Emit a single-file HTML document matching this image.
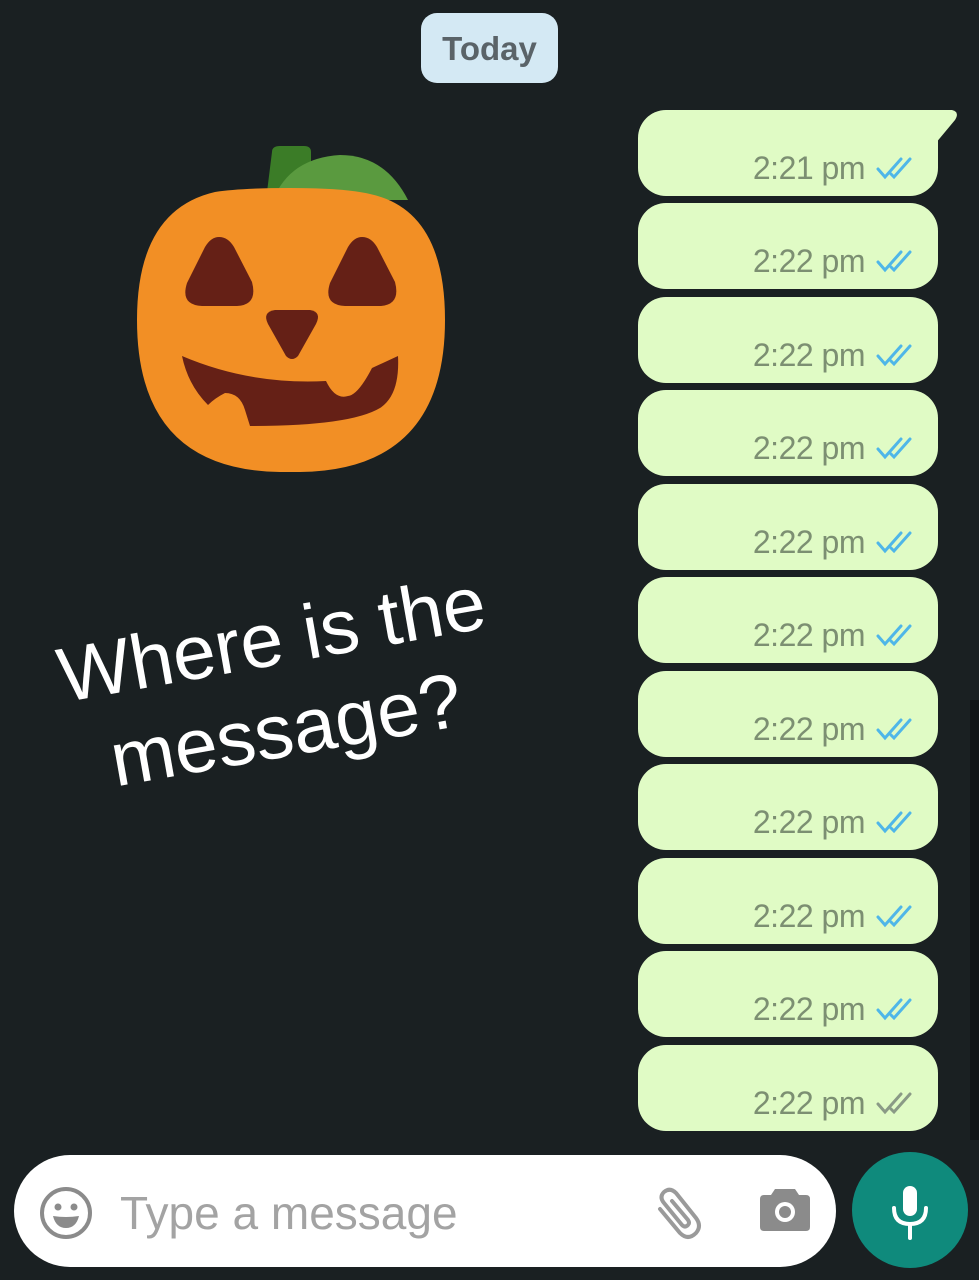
<!DOCTYPE html>
<html><head><meta charset="utf-8"><style>
html,body{margin:0;padding:0;}
body{width:979px;height:1280px;background:#1a2022;position:relative;overflow:hidden;font-family:"Liberation Sans",Arial,sans-serif;}
.b{position:absolute;left:638px;width:300px;height:86px;background:#e0fbc5;border-radius:28px;}
.t{position:absolute;right:73px;top:40px;font-size:32px;color:#7c8f72;letter-spacing:-0.5px;}
.c{position:absolute;right:22px;top:46px;}
</style></head><body>
<div style="position:absolute;left:421px;top:13px;width:137px;height:70px;background:#d4e9f4;border-radius:16px;text-align:center;line-height:72px;font-size:33px;font-weight:bold;color:#5a6368;">Today</div>

<svg style="position:absolute;left:0;top:0" width="979" height="1280">
<path d="M930 110 L952 110 Q960 112 955 120 L930 150 Z" fill="#e0fbc5"/>
<rect x="970" y="700" width="9" height="440" fill="#111516"/>
<path d="M272 152 Q272 146 280 146 L304 146 Q311 146 311 152 L311 200 L266 200 Z" fill="#3b7c27"/>
<path d="M273 200 Q290 158 340 155 Q385 155 408 200 Z" fill="#5a9a3f"/>
<path d="M215 192 Q240 188 290 188 Q345 188 370 194 Q445 210 445 320 Q445 470 300 472 L280 472 Q137 470 137 320 Q137 210 215 192 Z" fill="#f28f25"/>
<path d="M219 237 Q228 237 234 247 L252 282 Q258 305 237 306 L202 306 Q180 305 187 283 L205 247 Q211 237 219 237 Z" fill="#652016"/>
<path d="M362 237 Q371 237 377 247 L395 282 Q401 305 380 306 L345 306 Q323 305 330 283 L348 247 Q354 237 362 237 Z" fill="#652016"/>
<path d="M275 310 L310 310 Q322 312 316 324 L298 356 Q292 362 286 356 L268 324 Q262 312 275 310 Z" fill="#652016"/>
<path d="M182 356 Q250 385 326 381 Q335 400 348 396 Q358 395 372 368 L398 356 Q400 395 380 408 Q350 426 250 426 L245 410 Q240 393 225 393 Q215 398 208 405 Q188 385 182 356 Z" fill="#652016"/>
<g transform="rotate(-10 65 700)" fill="#fff" font-family="Liberation Sans, Arial, sans-serif" font-size="77">
<text x="63" y="702">Where is the</text>
<text x="100" y="794">message?</text>
</g>
</svg>

<div class="b" style="top:110px;border-top-right-radius:0"><span class="t">2:21 pm</span><svg class="c" width="40" height="26" viewBox="0 0 40 26"><path d="M2 13 L9 21 L25 3 M15 18 L18 21 L34 3" stroke="#4fb6e8" stroke-width="3" fill="none" stroke-linecap="round"/></svg></div>
<div class="b" style="top:203px"><span class="t">2:22 pm</span><svg class="c" width="40" height="26" viewBox="0 0 40 26"><path d="M2 13 L9 21 L25 3 M15 18 L18 21 L34 3" stroke="#4fb6e8" stroke-width="3" fill="none" stroke-linecap="round"/></svg></div>
<div class="b" style="top:297px"><span class="t">2:22 pm</span><svg class="c" width="40" height="26" viewBox="0 0 40 26"><path d="M2 13 L9 21 L25 3 M15 18 L18 21 L34 3" stroke="#4fb6e8" stroke-width="3" fill="none" stroke-linecap="round"/></svg></div>
<div class="b" style="top:390px"><span class="t">2:22 pm</span><svg class="c" width="40" height="26" viewBox="0 0 40 26"><path d="M2 13 L9 21 L25 3 M15 18 L18 21 L34 3" stroke="#4fb6e8" stroke-width="3" fill="none" stroke-linecap="round"/></svg></div>
<div class="b" style="top:484px"><span class="t">2:22 pm</span><svg class="c" width="40" height="26" viewBox="0 0 40 26"><path d="M2 13 L9 21 L25 3 M15 18 L18 21 L34 3" stroke="#4fb6e8" stroke-width="3" fill="none" stroke-linecap="round"/></svg></div>
<div class="b" style="top:577px"><span class="t">2:22 pm</span><svg class="c" width="40" height="26" viewBox="0 0 40 26"><path d="M2 13 L9 21 L25 3 M15 18 L18 21 L34 3" stroke="#4fb6e8" stroke-width="3" fill="none" stroke-linecap="round"/></svg></div>
<div class="b" style="top:671px"><span class="t">2:22 pm</span><svg class="c" width="40" height="26" viewBox="0 0 40 26"><path d="M2 13 L9 21 L25 3 M15 18 L18 21 L34 3" stroke="#4fb6e8" stroke-width="3" fill="none" stroke-linecap="round"/></svg></div>
<div class="b" style="top:764px"><span class="t">2:22 pm</span><svg class="c" width="40" height="26" viewBox="0 0 40 26"><path d="M2 13 L9 21 L25 3 M15 18 L18 21 L34 3" stroke="#4fb6e8" stroke-width="3" fill="none" stroke-linecap="round"/></svg></div>
<div class="b" style="top:858px"><span class="t">2:22 pm</span><svg class="c" width="40" height="26" viewBox="0 0 40 26"><path d="M2 13 L9 21 L25 3 M15 18 L18 21 L34 3" stroke="#4fb6e8" stroke-width="3" fill="none" stroke-linecap="round"/></svg></div>
<div class="b" style="top:951px"><span class="t">2:22 pm</span><svg class="c" width="40" height="26" viewBox="0 0 40 26"><path d="M2 13 L9 21 L25 3 M15 18 L18 21 L34 3" stroke="#4fb6e8" stroke-width="3" fill="none" stroke-linecap="round"/></svg></div>
<div class="b" style="top:1045px"><span class="t">2:22 pm</span><svg class="c" width="40" height="26" viewBox="0 0 40 26"><path d="M2 13 L9 21 L25 3 M15 18 L18 21 L34 3" stroke="#8a9a86" stroke-width="3" fill="none" stroke-linecap="round"/></svg></div>

<div style="position:absolute;left:14px;top:1155px;width:822px;height:112px;background:#fff;border-radius:56px;">
<svg style="position:absolute;left:24px;top:30px" width="56" height="56" viewBox="0 0 56 56"><circle cx="28" cy="28" r="24" stroke="#8b8b8b" stroke-width="4" fill="none"/><circle cx="20" cy="22" r="3.5" fill="#8b8b8b"/><circle cx="36" cy="22" r="3.5" fill="#8b8b8b"/><path d="M15 31 Q28 33 41 31 Q38 43 28 43 Q18 43 15 31 Z" fill="#8b8b8b"/></svg>
<div style="position:absolute;left:106px;top:31px;font-size:46px;color:#a3a3a3;">Type a message</div>
<svg style="position:absolute;left:632px;top:28px" width="60" height="60" viewBox="0 0 60 60"><path d="M14 26 L34 50 Q42 58 50 50 Q56 43 50 35 L30 10 Q24 4 18 9 Q13 14 18 20 L36 42 Q39 45 42 42 Q44 40 42 37 L26 18" stroke="#9a9a9a" stroke-width="4" fill="none" stroke-linecap="round"/></svg>
<svg style="position:absolute;left:745px;top:30px" width="52" height="48" viewBox="0 0 52 48"><path d="M16 4 L36 4 L40 10 L47 10 Q51 10 51 14 L51 42 Q51 46 47 46 L5 46 Q1 46 1 42 L1 14 Q1 10 5 10 L12 10 Z" fill="#8b8b8b"/><circle cx="26" cy="27" r="10" fill="#fff"/><circle cx="26" cy="27" r="6" fill="#8b8b8b"/></svg>
</div>
<div style="position:absolute;left:852px;top:1152px;width:116px;height:116px;border-radius:58px;background:#0f8a7c;">
<svg style="position:absolute;left:34px;top:30px" width="48" height="60" viewBox="0 0 48 60"><rect x="17" y="4" width="14" height="30" rx="7" fill="#fff"/><path d="M8 26 Q8 42 24 42 Q40 42 40 26" stroke="#fff" stroke-width="4" fill="none" stroke-linecap="round"/><path d="M24 42 L24 56" stroke="#fff" stroke-width="4" stroke-linecap="round"/></svg>
</div>
</body></html>
